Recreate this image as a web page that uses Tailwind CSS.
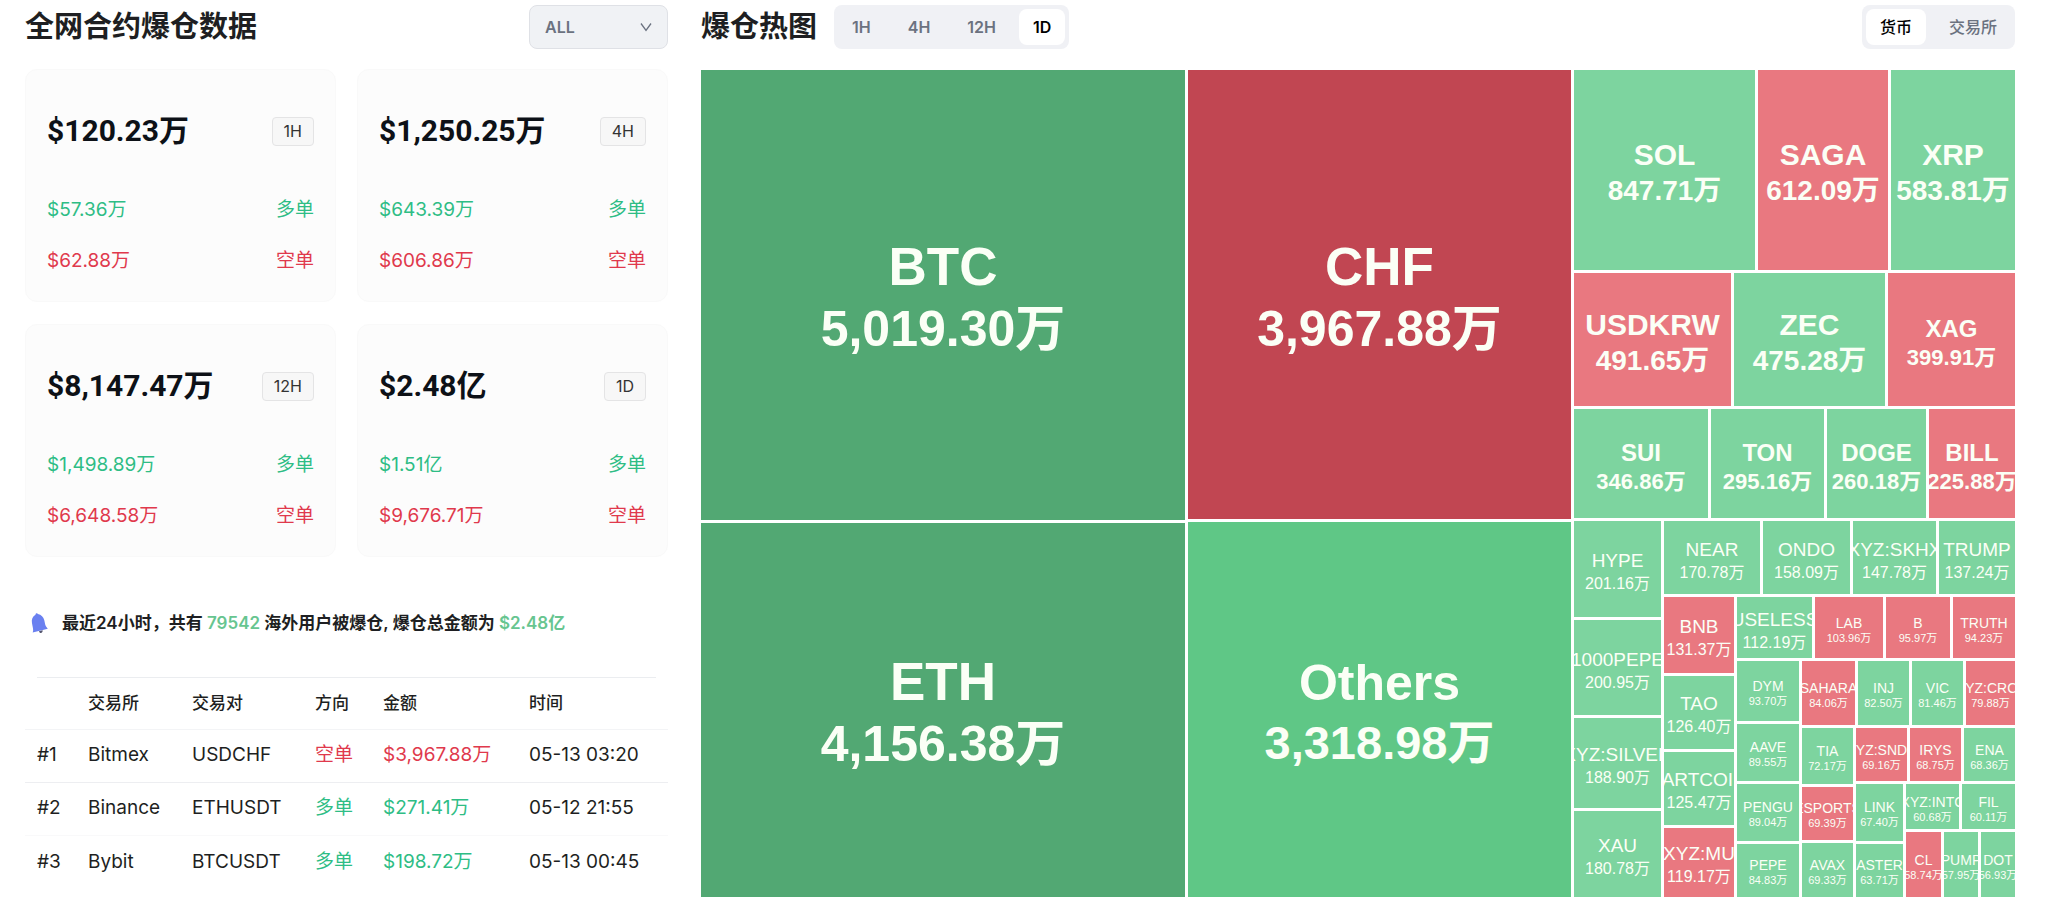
<!DOCTYPE html>
<html lang="zh-CN">
<head>
    <meta charset="UTF-8">
    <meta name="viewport" content="width=device-width, initial-scale=1.0">
    <title>全网合约爆仓数据</title>
    <script src="https://cdn.jsdelivr.net/npm/@tailwindcss/browser@4"></script>
</head>
<body class="bg-white text-[#1e1f22] font-['Inter','Noto_Sans_CJK_SC',sans-serif]">
    <div class="grid grid-cols-[643fr_1314fr] gap-[33px] pt-[5px] pl-[25px] pr-[33px]">
        <!-- Totals, summary and largest orders -->
        <section class="min-w-0">
            <div class="flex items-center justify-between h-11">
                <h1 class="text-[29px] leading-8 font-bold">全网合约爆仓数据</h1>
                <div class="relative">
                    <label for="coin" class="sr-only">币种</label>
                    <select id="coin" class="appearance-none w-[139px] h-11 pl-[15px] pr-10 rounded-lg border border-[#dfe1e6] bg-[#f0f2f5] text-base font-semibold text-[#6b7280]">
                        <option>ALL</option>
                        <option>BTC</option>
                        <option>ETH</option>
                    </select>
                    <svg class="absolute right-4 top-4 w-3 h-3 pointer-events-none" viewBox="0 0 12 12" fill="none" stroke="#6b7280" stroke-width="1.3"><path d="M1 2.500l5 7 5-7"/></svg>
                </div>
            </div>

            <div id="cards" class="grid grid-cols-2 gap-x-[21px] gap-y-[22px] mt-5"></div>

            <div class="flex items-center gap-[14px] mt-12 pl-[6px] h-9">
                <svg class="w-[17px] h-[21px]" viewBox="0 0 17 21">
                    <path d="M5 .5c.8-.5 1.600-.2 1.900.5 3.400.8 5.600 3 6.400 6.200l.9 4.300c.3 1.300 1.200 2.700 2.600 4.200L1.700 19.400c.5-1.300.6-2.600.3-4L1 10.200C.3 6.500 1.500 3.500 4.500 1.700c0-.5.1-.9.5-1.200z" fill="#6a80f0"/>
                    <path d="M8 18.200l3.600-.9c.2 1.300-.4 2.300-1.400 2.600-1 .2-1.900-.4-2.200-1.700z" fill="#55566f"/>
                </svg>
                <p class="text-[17px] leading-6 font-semibold whitespace-nowrap">最近24小时，共有 <span class="text-[#67c590]">79542</span> 海外用户被爆仓, 爆仓总金额为 <span class="text-[#67c590]">$2.48亿</span></p>
            </div>

            <div class="mt-9 mx-3 border-t border-[#ebedf0]"></div>
            <table class="w-full table-fixed text-left text-[19px]">
                <thead>
                    <tr class="h-[51px] border-b border-[#f3f4f6] text-[17px]">
                        <th class="w-[51px] pl-3 font-medium"></th>
                        <th class="w-[104px] pl-3 font-medium">交易所</th>
                        <th class="w-[123px] pl-3 font-medium">交易对</th>
                        <th class="w-[68px] pl-3 font-medium">方向</th>
                        <th class="w-[146px] pl-3 font-medium">金额</th>
                        <th class="pl-3 font-medium">时间</th>
                    </tr>
                </thead>
                <tbody id="orders"></tbody>
            </table>
        </section>

        <!-- Heatmap -->
        <section class="min-w-0">
            <div class="flex items-center gap-[17px] h-11">
                <h2 class="text-[29px] leading-8 font-bold">爆仓热图</h2>
                <div class="flex gap-[9px] p-1 h-11 rounded-lg bg-[#f0f1f5] text-base font-semibold text-[#6b7280]">
                    <button class="px-[14px] rounded-lg">1H</button>
                    <button class="px-[14px] rounded-lg">4H</button>
                    <button class="px-[14px] rounded-lg">12H</button>
                    <button class="px-[14px] rounded-lg bg-white text-black">1D</button>
                </div>
                <div class="flex gap-[9px] p-1 h-11 ml-auto rounded-lg bg-[#f0f1f5] text-base font-medium text-[#6b7280]">
                    <button class="px-[14px] rounded-lg bg-white text-black">货币</button>
                    <button class="px-[14px] rounded-lg">交易所</button>
                </div>
            </div>
            <div id="heatmap" class="flex gap-[3px] mt-[21px] h-[calc(100vh-94px)] text-[#fbfff6] font-['Liberation_Sans','Noto_Sans_CJK_SC',sans-serif]"></div>
        </section>
    </div>

    <script>
        const cards = [
            ['$120.23万', '1H', '$57.36万', '$62.88万'],
            ['$1,250.25万', '4H', '$643.39万', '$606.86万'],
            ['$8,147.47万', '12H', '$1,498.89万', '$6,648.58万'],
            ['$2.48亿', '1D', '$1.51亿', '$9,676.71万'],
        ];

        document.getElementById('cards').innerHTML = cards.map(([total, period, longs, shorts]) => `
            <div class="rounded-xl border border-[#f9f9f9] bg-[#fcfcfc] px-[21px] pt-9 pb-[14px] text-[19px]">
                <div class="flex items-center justify-between h-[50px] mb-[29px]">
                    <strong class="text-[30px] leading-none font-bold text-[#0d1117] font-['Roboto','Noto_Sans_CJK_SC',sans-serif]">${total}</strong>
                    <span class="rounded border border-[#e4e4e5] bg-[#f7f7f7] px-[11px] text-base leading-[27px] text-[#333]">${period}</span>
                </div>
                <div class="flex items-center justify-between h-[51px] text-[#2ebd85]"><span>${longs}</span><span>多单</span></div>
                <div class="flex items-center justify-between h-[51px] text-[#e0394c]"><span>${shorts}</span><span>空单</span></div>
            </div>
        `).join('');

        const orders = [
            ['Bitmex', 'USDCHF', '空单', '$3,967.88万', '05-13 03:20'],
            ['Binance', 'ETHUSDT', '多单', '$271.41万', '05-12 21:55'],
            ['Bybit', 'BTCUSDT', '多单', '$198.72万', '05-13 00:45'],
        ];

        document.getElementById('orders').innerHTML = orders.map(([exchange, pair, side, amount, time], i) => {
            const color = side === '多单' ? 'text-[#2ebd85]' : 'text-[#e0394c]';
            return `
                <tr class="h-[53px] border-b border-[#edeef1] even:border-[#f9f9fa] last:border-0 whitespace-nowrap">
                    <td class="pl-3">#${i + 1}</td>
                    <td class="pl-3">${exchange}</td>
                    <td class="pl-3">${pair}</td>
                    <td class="pl-3 ${color}">${side}</td>
                    <td class="pl-3 ${color}">${amount}</td>
                    <td class="pl-3">${time}</td>
                </tr>
            `;
        }).join('');

        const colors = {
            G: 'bg-[#52a873]',
            g: 'bg-[#5fc786]',
            l: 'bg-[#7dd49f]',
            R: 'bg-[#c14652]',
            r: 'bg-[#e97880]',
        };

        // name and value text, largest tiles first
        const sizes = {
            xxl: ['text-[53px] leading-[62px] font-bold', 'text-[50px] leading-[62px] font-bold'],
            xl: ['text-[50px] leading-[60px] font-bold', 'text-[47px] leading-[60px] font-bold'],
            lg: ['text-[30px] leading-9 font-bold', 'text-[28px] leading-9 font-bold'],
            md: ['text-2xl leading-[29px] font-bold', 'text-[22px] leading-[29px] font-bold'],
            sm: ['text-[19px] leading-[23px]', 'text-base leading-[23px]'],
            xs: ['text-sm leading-[15px]', 'text-[11px] leading-[15px]'],
        };

        const row = (weight, ...items) => ({ dir: 'flex-row', weight, items });
        const col = (weight, ...items) => ({ dir: 'flex-col', weight, items });
        const tile = (weight, color, size, name, value) => ({ weight, color, size, name, value });

        const tree = [
            col(484,
                tile(451, 'G', 'xxl', 'BTC', '5,019.30万'),
                tile(373, 'G', 'xxl', 'ETH', '4,156.38万')),
            col(383,
                tile(450, 'R', 'xxl', 'CHF', '3,967.88万'),
                tile(374, 'g', 'xl', 'Others', '3,318.98万')),
            col(441,
                row(200,
                    tile(181, 'l', 'lg', 'SOL', '847.71万'),
                    tile(130, 'r', 'lg', 'SAGA', '612.09万'),
                    tile(124, 'l', 'lg', 'XRP', '583.81万')),
                row(133,
                    tile(157, 'r', 'lg', 'USDKRW', '491.65万'),
                    tile(151, 'l', 'lg', 'ZEC', '475.28万'),
                    tile(127, 'r', 'md', 'XAG', '399.91万')),
                row(109,
                    tile(134, 'l', 'md', 'SUI', '346.86万'),
                    tile(113, 'l', 'md', 'TON', '295.16万'),
                    tile(99, 'l', 'md', 'DOGE', '260.18万'),
                    tile(86, 'r', 'md', 'BILL', '225.88万')),
                row(376,
                    col(87,
                        tile(96, 'l', 'sm', 'HYPE', '201.16万'),
                        tile(96, 'l', 'sm', '1000PEPE', '200.95万'),
                        tile(89, 'l', 'sm', 'XYZ:SILVER', '188.90万'),
                        tile(86, 'l', 'sm', 'XAU', '180.78万')),
                    col(351,
                        row(73,
                            tile(96, 'l', 'sm', 'NEAR', '170.78万'),
                            tile(87, 'l', 'sm', 'ONDO', '158.09万'),
                            tile(83, 'l', 'sm', 'XYZ:SKHX', '147.78万'),
                            tile(76, 'l', 'sm', 'TRUMP', '137.24万')),
                        row(300,
                            col(70,
                                tile(76, 'r', 'sm', 'BNB', '131.37万'),
                                tile(73, 'l', 'sm', 'TAO', '126.40万'),
                                tile(73, 'l', 'sm', 'FARTCOIN', '125.47万'),
                                tile(69, 'r', 'sm', 'XYZ:MU', '119.17万')),
                            col(278,
                                row(61,
                                    tile(75, 'l', 'sm', 'USELESS', '112.19万'),
                                    tile(68, 'r', 'xs', 'LAB', '103.96万'),
                                    tile(64, 'r', 'xs', 'B', '95.97万'),
                                    tile(62, 'r', 'xs', 'TRUTH', '94.23万')),
                                row(236,
                                    col(62,
                                        tile(60, 'l', 'xs', 'DYM', '93.70万'),
                                        tile(57, 'l', 'xs', 'AAVE', '89.55万'),
                                        tile(57, 'l', 'xs', 'PENGU', '89.04万'),
                                        tile(53, 'l', 'xs', 'PEPE', '84.83万')),
                                    col(213,
                                        row(64,
                                            tile(53, 'r', 'xs', 'SAHARA', '84.06万'),
                                            tile(51, 'l', 'xs', 'INJ', '82.50万'),
                                            tile(51, 'l', 'xs', 'VIC', '81.46万'),
                                            tile(49, 'r', 'xs', 'XYZ:CRCL', '79.88万')),
                                        row(169,
                                            col(51,
                                                tile(56, 'l', 'xs', 'TIA', '72.17万'),
                                                tile(53, 'r', 'xs', 'ESPORTS', '69.39万'),
                                                tile(54, 'l', 'xs', 'AVAX', '69.33万')),
                                            col(159,
                                                row(53,
                                                    tile(51, 'r', 'xs', 'XYZ:SNDK', '69.16万'),
                                                    tile(51, 'r', 'xs', 'IRYS', '68.75万'),
                                                    tile(51, 'l', 'xs', 'ENA', '68.36万')),
                                                row(113,
                                                    col(47,
                                                        tile(57, 'l', 'xs', 'LINK', '67.40万'),
                                                        tile(53, 'l', 'xs', 'ASTER', '63.71万')),
                                                    col(109,
                                                        row(45,
                                                            tile(53, 'l', 'xs', 'XYZ:INTC', '60.68万'),
                                                            tile(53, 'l', 'xs', 'FIL', '60.11万')),
                                                        row(65,
                                                            tile(35, 'r', 'xs', 'CL', '58.74万'),
                                                            tile(34, 'l', 'xs', 'PUMP', '57.95万'),
                                                            tile(34, 'l', 'xs', 'DOT', '56.93万'))))))))))))),
        ];

        function render(node) {
            if (node.items) {
                return `<div class="flex ${node.dir} gap-[3px] min-w-0 min-h-0" style="flex: ${node.weight} 1 0">${node.items.map(render).join('')}</div>`;
            }
            const [nameSize, valueSize] = sizes[node.size];
            return `
                <div class="flex flex-col items-center justify-center pt-[6px] min-w-0 min-h-0 overflow-hidden whitespace-nowrap ${colors[node.color]}" style="flex: ${node.weight} 1 0">
                    <div class="${nameSize}">${node.name}</div>
                    <div class="${valueSize}">${node.value}</div>
                </div>
            `;
        }

        document.getElementById('heatmap').innerHTML = tree.map(render).join('');
    </script>
</body>
</html>
